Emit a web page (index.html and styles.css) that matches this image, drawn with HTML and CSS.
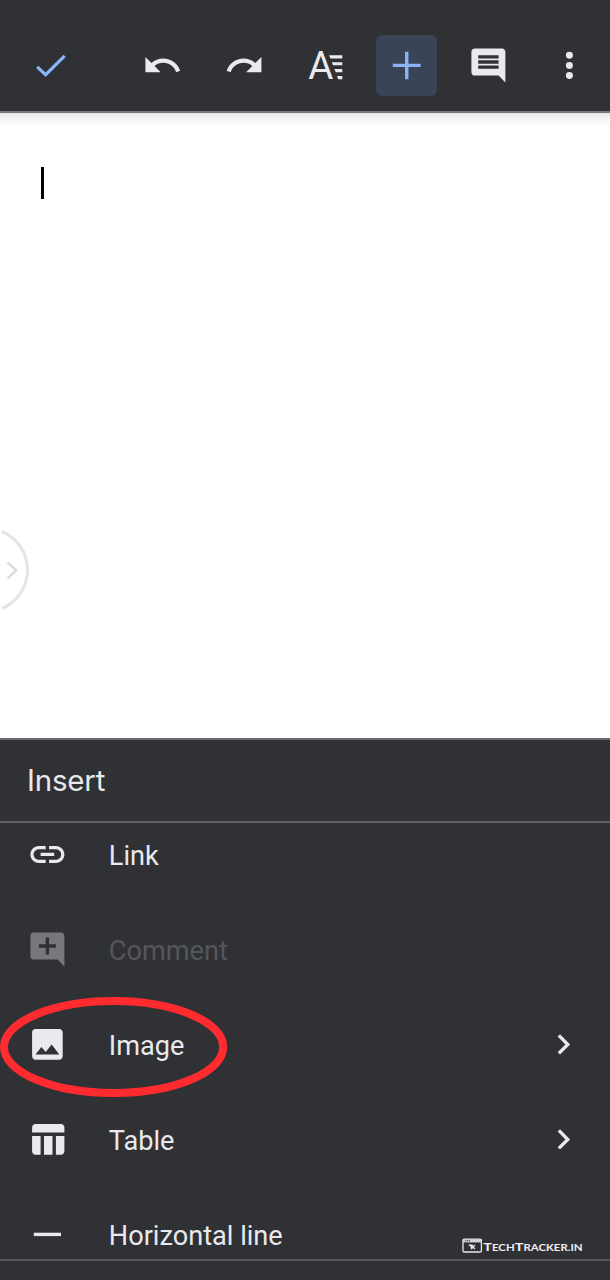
FILE: index.html
```html
<!DOCTYPE html>
<html lang="en">
<head>
<meta charset="utf-8">
<title>Insert</title>
<link rel="stylesheet" href="styles.css">
</head>
<body>
<div class="app">
  <header class="toolbar">
    <button class="tool tool-done" aria-label="Done"><svg class="icon" viewBox="0 0 24 24"><path d="M4.2 12.9l5 4.6L20.4 6.4" fill="none" stroke="currentColor" stroke-width="1.9"/></svg></button>
    <button class="tool" aria-label="Undo"><svg class="icon" viewBox="0 0 24 24"><path d="M12.5 8c-2.65 0-5.05.99-6.9 2.6L2 7v9h9l-3.62-3.62c1.39-1.16 3.16-1.88 5.12-1.88 3.54 0 6.55 2.31 7.6 5.5l2.37-.78C21.08 11.03 17.15 8 12.5 8z"/></svg></button>
    <button class="tool" aria-label="Redo"><svg class="icon" viewBox="0 0 24 24"><path d="M18.4 10.6C16.55 8.99 14.15 8 11.5 8c-4.65 0-8.58 3.03-9.96 7.22L3.9 16c1.05-3.19 4.05-5.5 7.6-5.5 1.95 0 3.73.72 5.12 1.88L13 16h9V7l-3.6 3.6z"/></svg></button>
    <button class="tool" aria-label="Format"><svg class="icon" viewBox="0 0 40.8 40.8"><text class="format-letter" x="3.3" y="34.4">A</text><path d="M24.1 10.3H37.3v3.3H25.4zM26.8 17.2H37.3v3.1H28zM29.4 24H37.3v3.2H30.7zM32 30.9H37.3v3.3H33.3z"/></svg></button>
    <button class="tool tool-active" aria-label="Insert"><svg class="icon" viewBox="0 0 24 24"><path d="M12.2 3.9v16.2M4 12h16.4" fill="none" stroke="currentColor" stroke-width="2"/></svg></button>
    <button class="tool" aria-label="Comments"><svg class="icon" viewBox="0 0 24 24"><path d="M21.99 4c0-1.1-.89-2-1.99-2H4c-1.1 0-2 .9-2 2v12c0 1.1.9 2 2 2h14l4 4-.01-18zM18 14H6v-2h12v2zm0-3H6V9h12v2zm0-3H6V6h12v2z"/></svg></button>
    <button class="tool" aria-label="More"><svg class="icon" viewBox="0 0 24 24"><circle cx="12" cy="6" r="2.05"/><circle cx="12" cy="12" r="2.05"/><circle cx="12" cy="18" r="2.05"/></svg></button>
  </header>

  <main class="document">
    <div class="caret"></div>
    <svg class="handle" viewBox="0 0 32 84"><path d="M2 3.5A41.8 41.8 0 0 1 2 80.5" fill="none" stroke="#e5e5e5" stroke-width="3.2"/><path d="M7.5 34.3l8.7 8-8.7 8" fill="none" stroke="#dcdcdc" stroke-width="2.4"/></svg>
  </main>

  <section class="panel">
    <h1 class="panel-title">Insert</h1>
    <ul class="menu">
      <li class="item"><svg class="icon" viewBox="0 0 24 24"><path d="M3.9 12c0-1.71 1.39-3.1 3.1-3.1h4V7H7c-2.76 0-5 2.24-5 5s2.24 5 5 5h4v-1.9H7c-1.71 0-3.1-1.39-3.1-3.1zM8 13h8v-2H8v2zm9-6h-4v1.9h4c1.71 0 3.1 1.39 3.1 3.1s-1.39 3.1-3.1 3.1h-4V17h4c2.76 0 5-2.24 5-5s-2.24-5-5-5z"/></svg><span class="label">Link</span></li>
      <li class="item item-disabled"><svg class="icon" viewBox="0 0 24 24"><path d="M22 4c0-1.1-.9-2-2-2H4c-1.1 0-2 .9-2 2v12c0 1.1.9 2 2 2h14l4 4V4zM17 11h-4v4h-2v-4H7V9h4V5h2v4h4v2z"/></svg><span class="label">Comment</span></li>
      <li class="item"><svg class="icon" viewBox="0 0 24 24"><path d="M21 19V5c0-1.1-.9-2-2-2H5c-1.1 0-2 .9-2 2v14c0 1.1.9 2 2 2h14c1.1 0 2-.9 2-2zM8.5 13.5l2.5 3.01L14.5 12l4.5 6H5l3.5-4.5z"/></svg><span class="label">Image</span><svg class="icon" viewBox="0 0 24 24"><path d="M10 6L8.59 7.41 13.17 12l-4.58 4.59L10 18l6-6z"/></svg>
        <svg class="highlight" viewBox="0 0 228 102"><ellipse cx="113.6" cy="51" rx="109.6" ry="46" fill="none" stroke="#ff2b2f" stroke-width="8"/></svg></li>
      <li class="item"><svg class="icon" viewBox="0 0 24 24"><path d="M10 10.02h5V21h-5V10.02zM17 21h3c1.1 0 2-.9 2-2v-9h-5v11zm3-18H5c-1.1 0-2 .9-2 2v3h19V5c0-1.1-.9-2-2-2zM3 19c0 1.1.9 2 2 2h3V10H3v9z"/></svg><span class="label">Table</span><svg class="icon" viewBox="0 0 24 24"><path d="M10 6L8.59 7.41 13.17 12l-4.58 4.59L10 18l6-6z"/></svg></li>
      <li class="item"><svg class="icon" viewBox="0 0 24 24"><path d="M4 11h16v2H4z"/></svg><span class="label">Horizontal line</span></li>
    </ul>
    <svg class="watermark" viewBox="0 0 124 18">
      <rect x="1" y="2.2" width="18.4" height="12.8" rx="1.2" fill="none" stroke="#e8e8ea" stroke-width="1.3"/>
      <path d="M1 2.2h18.4v3.2H1z" fill="#d5d5d8"/>
      <path d="M3 3.8h5" stroke="#303135" stroke-width="1" stroke-dasharray="1.2 .7"/>
      <path d="M6.8 7.6h3.6l1.1 1.3 1-1.1h1.2l-1.6 2.1 1.5 2.4h-1.4l-1-1.3-1.2 1.3H9l-.7-3.2H6.8z" fill="#e8e8ea"/>
      <text class="watermark-text" x="21.2" y="14.2" textLength="99.5" lengthAdjust="spacingAndGlyphs">T<tspan class="small">ECH</tspan>T<tspan class="small">RACKER.IN</tspan></text>
    </svg>
  </section>
</div>
</body>
</html>
```
FILE: styles.css
```css
* { box-sizing: border-box; }

body {
  margin: 0;
  background: #303135;
  font-family: Roboto, "Liberation Sans", sans-serif;
}

.app {
  display: flex;
  flex-direction: column;
  height: 1280px;
  overflow: hidden;
}

.toolbar {
  display: flex;
  flex: none;
  height: 112.5px;
  padding: 34.7px 10px 0 20px;
  background: #303135;
  border-bottom: 2px solid #77787a;
}

.tool {
  display: flex;
  flex: none;
  align-items: center;
  justify-content: center;
  width: 61px;
  height: 61px;
  margin: 0 20.33px 0 0;
  padding: 0;
  border: 0;
  border-radius: 6px;
  background: none;
  color: #e9eaee;
}

.tool-done { margin-right: 51.3px; color: #8ab4f8; }
.tool-active { background: #394457; color: #8ab4f8; }

.icon {
  flex: none;
  width: 40.8px;
  height: 40.8px;
  fill: currentColor;
  overflow: visible;
}

.format-letter { font: 400 38.4px Roboto, sans-serif; }

.document {
  position: relative;
  flex: 1;
  padding: 54px 41px;
  background: linear-gradient(#e6e6e6, #f6f6f6 6px, #fff 14px);
}

.caret {
  width: 3px;
  height: 32px;
  background: #000;
}

.handle {
  position: absolute;
  left: 0;
  top: 415.5px;
  width: 32px;
  height: 84px;
}

.panel {
  position: relative;
  flex: none;
  height: 542px;
  border-top: 2px solid #68696b;
  background: #303135;
  color: #e8eaed;
}

.panel-title {
  height: 83px;
  margin: 0;
  padding-left: 27px;
  border-bottom: 2px solid #616265;
  font: 400 29.5px/81px Inter, sans-serif;
  letter-spacing: -0.2px;
}

.menu {
  height: 438px;
  margin: 0;
  padding: 0;
  overflow: hidden;
  border-bottom: 2px solid #56575a;
  list-style: none;
}

.item {
  position: relative;
  display: flex;
  align-items: center;
  height: 95px;
  padding: 0 26.5px 0 27px;
}

.item:first-child { margin-top: -16px; }

.label {
  flex: 1;
  padding: 2px 0 0 41px;
  font-size: 27.15px;
  line-height: 32px;
}

.item-disabled { color: #77787b; }
.item-disabled .label { color: #55565a; }

.highlight {
  position: absolute;
  left: 0;
  top: -1px;
  width: 228px;
  height: 102px;
}

.watermark {
  position: absolute;
  left: 462px;
  top: 497px;
  width: 124px;
  height: 18px;
}

.watermark-text {
  fill: #f0f0f2;
  font: 700 12px Lato, sans-serif;
}

.watermark-text .small { font-size: 9.4px; }
```
